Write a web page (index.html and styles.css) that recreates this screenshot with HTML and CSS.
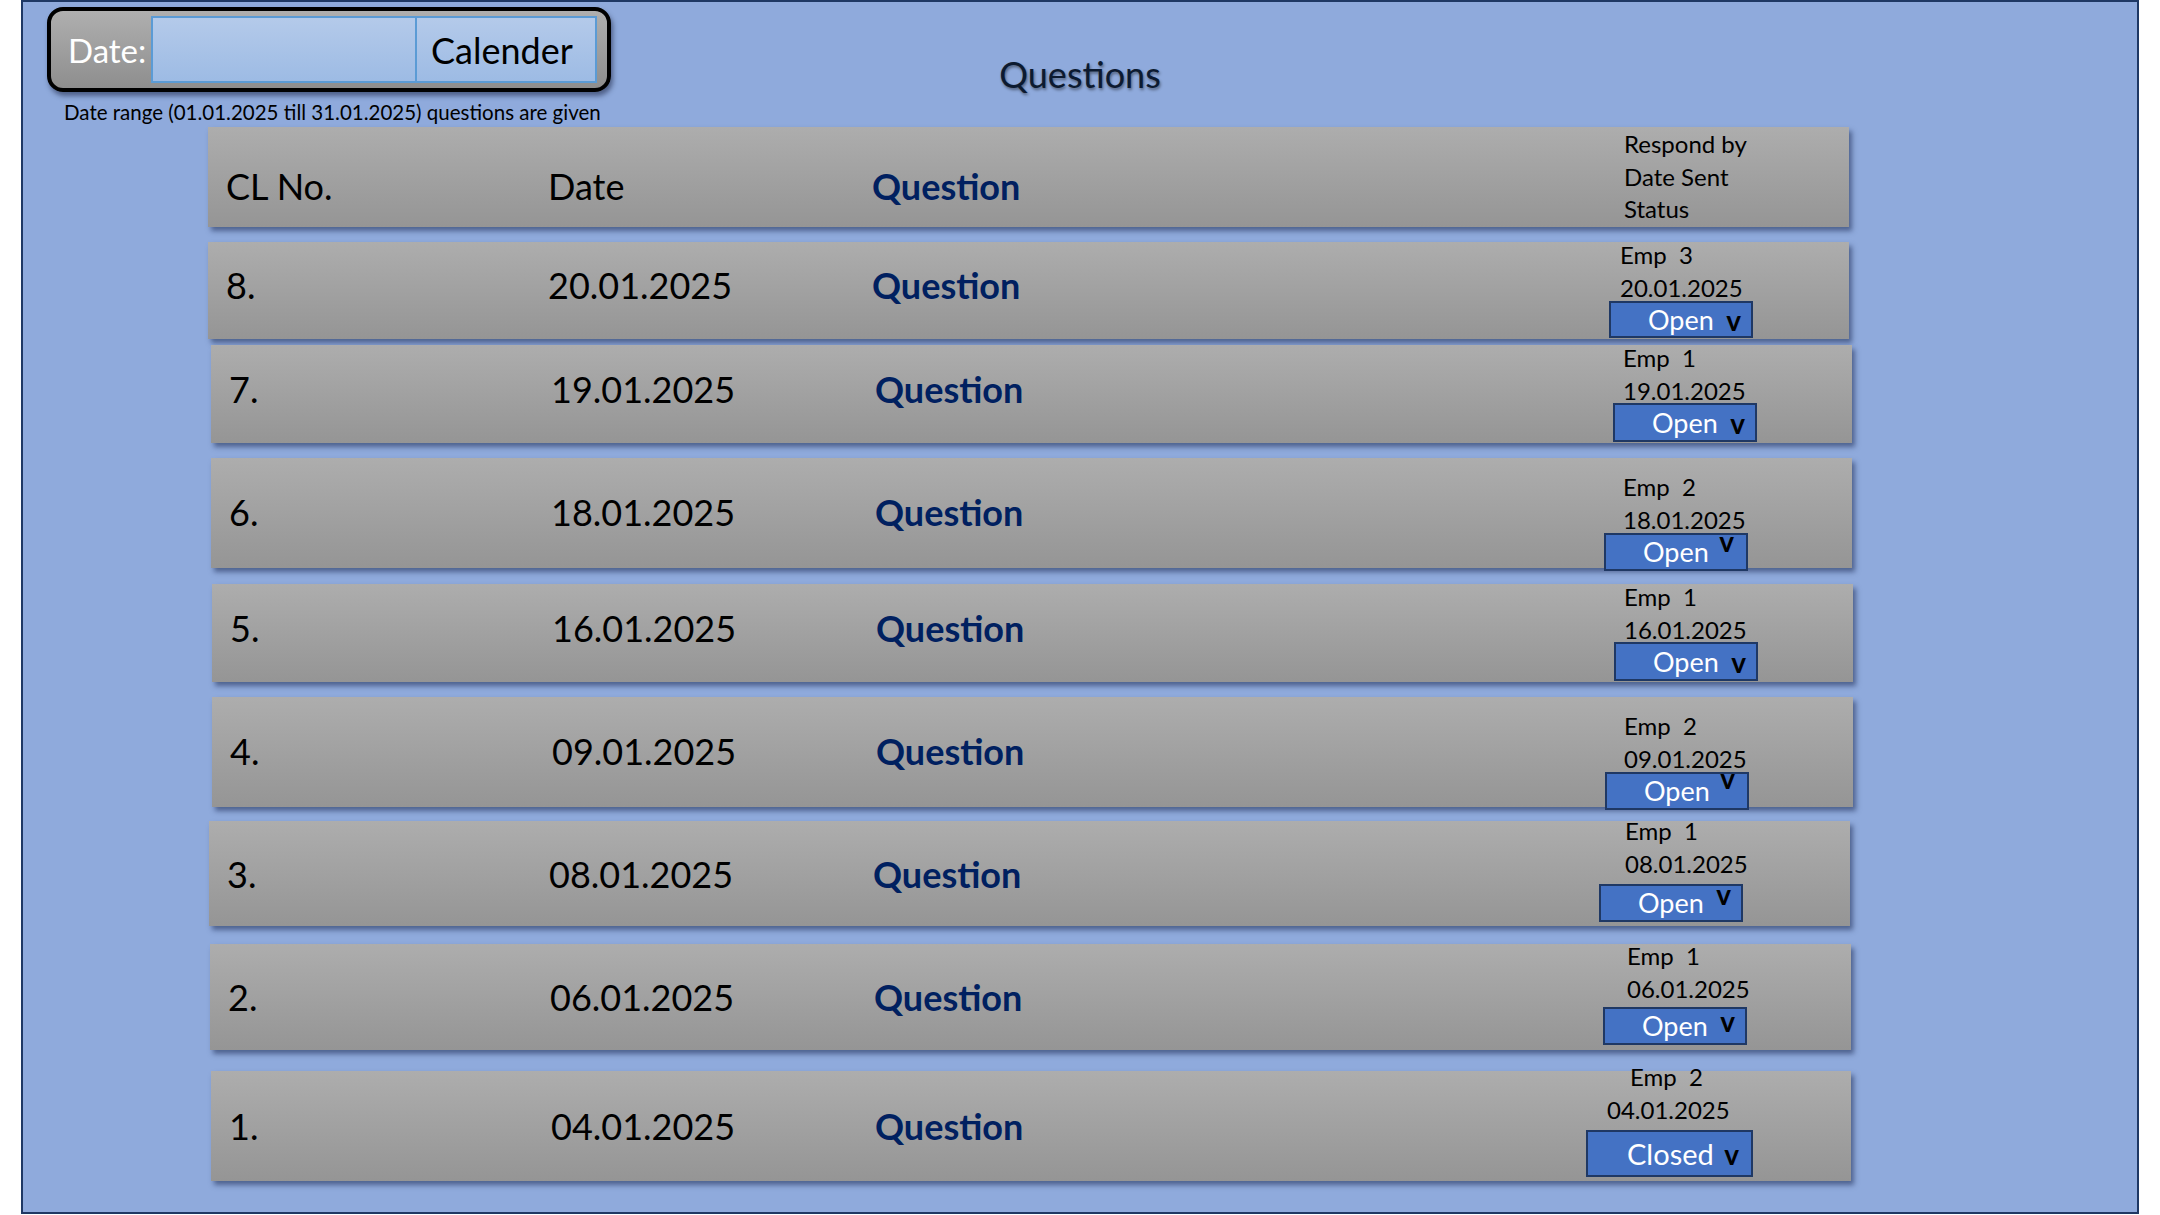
FILE: index.html
```html
<!DOCTYPE html>
<html lang="en">
<head>
<meta charset="utf-8">
<title>Questions</title>
<link rel="stylesheet" href="styles.css">
</head>
<body>
<div class="slide">
  <div class="top">
    <div class="filter">
      <div class="datebox">
        <span class="datelabel">Date:</span>
        <div class="dateinput"></div>
        <div class="calbtn">Calender</div>
      </div>
      <p class="range">Date range (01.01.2025 till 31.01.2025) questions are given</p>
    </div>
    <h1 class="title">Questions</h1>
    <div></div>
  </div>

  <div class="table">
    <div class="row head">
      <span class="cell">CL No.</span>
      <span class="cell">Date</span>
      <span class="cell q">Question</span>
      <div class="head-resp"><span>Respond by</span><span>Date Sent</span><span>Status</span></div>
    </div>

    <div class="row r8">
      <span class="cell">8.</span>
      <span class="cell">20.01.2025</span>
      <span class="cell q">Question</span>
      <div class="resp">
        <span class="emp">Emp&nbsp; 3</span>
        <span class="sent">20.01.2025</span>
        <div class="status"><span class="st">Open</span><span class="chev">v</span></div>
      </div>
    </div>

    <div class="row r7">
      <span class="cell">7.</span>
      <span class="cell">19.01.2025</span>
      <span class="cell q">Question</span>
      <div class="resp">
        <span class="emp">Emp&nbsp; 1</span>
        <span class="sent">19.01.2025</span>
        <div class="status"><span class="st">Open</span><span class="chev">v</span></div>
      </div>
    </div>

    <div class="row r6">
      <span class="cell">6.</span>
      <span class="cell">18.01.2025</span>
      <span class="cell q">Question</span>
      <div class="resp">
        <span class="emp">Emp&nbsp; 2</span>
        <span class="sent">18.01.2025</span>
        <div class="status"><span class="st">Open</span><span class="chev up">v</span></div>
      </div>
    </div>

    <div class="row r5">
      <span class="cell">5.</span>
      <span class="cell">16.01.2025</span>
      <span class="cell q">Question</span>
      <div class="resp">
        <span class="emp">Emp&nbsp; 1</span>
        <span class="sent">16.01.2025</span>
        <div class="status"><span class="st">Open</span><span class="chev">v</span></div>
      </div>
    </div>

    <div class="row r4">
      <span class="cell">4.</span>
      <span class="cell">09.01.2025</span>
      <span class="cell q">Question</span>
      <div class="resp">
        <span class="emp">Emp&nbsp; 2</span>
        <span class="sent">09.01.2025</span>
        <div class="status"><span class="st">Open</span><span class="chev up top0">v</span></div>
      </div>
    </div>

    <div class="row r3">
      <span class="cell">3.</span>
      <span class="cell">08.01.2025</span>
      <span class="cell q">Question</span>
      <div class="resp">
        <span class="emp">Emp&nbsp; 1</span>
        <span class="sent">08.01.2025</span>
        <div class="status"><span class="st">Open</span><span class="chev up low">v</span></div>
      </div>
    </div>

    <div class="row r2">
      <span class="cell">2.</span>
      <span class="cell">06.01.2025</span>
      <span class="cell q">Question</span>
      <div class="resp">
        <span class="emp">Emp&nbsp; 1</span>
        <span class="sent">06.01.2025</span>
        <div class="status"><span class="st">Open</span><span class="chev mid">v</span></div>
      </div>
    </div>

    <div class="row r1">
      <span class="cell">1.</span>
      <span class="cell">04.01.2025</span>
      <span class="cell q">Question</span>
      <div class="resp">
        <span class="emp">Emp&nbsp; 2</span>
        <span class="sent">04.01.2025</span>
        <div class="status closed"><span class="st">Closed</span><span class="chev">v</span></div>
      </div>
    </div>
  </div>
</div>
</body>
</html>
```

FILE: styles.css
```css
* { box-sizing: border-box; }

html, body {
  margin: 0;
  padding: 0;
  background: #ffffff;
}

body {
  width: 2160px;
  height: 1215px;
  overflow: hidden;
  font-family: Lato, "Noto Sans", sans-serif;
  color: #000;
}

.slide {
  margin-left: 21px;
  width: 2118px;
  height: 1214px;
  border: 2px solid #1f3864;
  background: #8faadc;
}

/* ---------- top area ---------- */
.top {
  height: 125px;
  display: grid;
  grid-template-columns: 1fr auto 1fr;
  align-items: start;
}

.filter {
  margin: 5px 0 0 24px;
}

.datebox {
  width: 564px;
  height: 85px;
  border: 4px solid #000;
  border-radius: 16px;
  background: linear-gradient(#afafaf, #8e8e8e);
  box-shadow: 2px 4px 5px rgba(25, 35, 65, 0.55);
  display: flex;
  align-items: center;
  padding-left: 17px;
}

.datelabel {
  width: 83px;
  color: #fff;
  font-size: 33px;
  line-height: 40px;
}

.dateinput {
  width: 266px;
  height: 67px;
  border: 2px solid #5b9bd5;
  background: linear-gradient(#b4caea, #9dbbe4);
}

.calbtn {
  width: 180px;
  height: 67px;
  border: 2px solid #5b9bd5;
  border-left: 0;
  background: linear-gradient(#b4caea, #9dbbe4);
  font-size: 36px;
  line-height: 44px;
  display: flex;
  align-items: center;
  padding-left: 14px;
}

.range {
  margin: 8px 0 0 17px;
  font-size: 20.5px;
  line-height: 24px;
  white-space: nowrap;
}

.title {
  margin: 50px 0 0;
  font-size: 36px;
  font-weight: 400;
  line-height: 44px;
  color: #0c1a30;
  text-shadow: 1px 2px 3px rgba(0, 0, 0, 0.45);
}

/* ---------- table ---------- */
.table {
  margin-left: 185px;
}

.row {
  width: 1641px;
  display: grid;
  grid-template-columns: 322px 324px 748px 1fr;
  align-items: center;
  padding-left: 18px;
  background: linear-gradient(#adadad, #959595);
  box-shadow: 3px 4px 5px rgba(25, 40, 80, 0.55);
}

.cell {
  font-size: 36px;
  line-height: 44px;
  white-space: nowrap;
}

.q {
  font-weight: 700;
  color: #002060;
}

.head { height: 100px; }
.head .cell { margin-top: 17px; }

.head-resp {
  margin-left: 4px;
  display: flex;
  flex-direction: column;
  font-size: 24px;
  line-height: 32.5px;
}

.r8 { margin-top: 15px; height: 97px; }
.r7 { margin-top: 6px;  height: 98px;  margin-left: 3px; }
.r6 { margin-top: 15px; height: 110px; margin-left: 3px; }
.r5 { margin-top: 16px; height: 98px;  margin-left: 4px; }
.r4 { margin-top: 15px; height: 110px; margin-left: 4px; }
.r3 { margin-top: 14px; height: 105px; margin-left: 1px; }
.r2 { margin-top: 18px; height: 106px; margin-left: 2px; }
.r1 { margin-top: 21px; height: 110px; margin-left: 3px; width: 1640px; }

.r8 .cell, .r7 .cell, .r5 .cell { margin-bottom: 11px; }
.r6 .cell, .r4 .cell { margin-bottom: 5px; }

/* responder / date sent / status block */
.resp {
  align-self: start;
  display: flex;
  flex-direction: column;
  align-items: flex-start;
  font-size: 24px;
  line-height: 33px;
  white-space: nowrap;
}

.status {
  width: 144px;
  height: 38px;
  border: 2px solid #1f3864;
  background: #4472c4;
  display: flex;
  align-items: center;
  padding: 0 10px 0 37px;
}

.st {
  color: #fff;
  font-size: 27px;
  line-height: 34px;
}

.chev {
  margin-left: auto;
  font-size: 28px;
  font-weight: 700;
  line-height: 34px;
  color: #000;
}

.chev.up { align-self: flex-start; line-height: 10px; margin-top: 1px; }
.chev.up.top0 { margin-top: -1px; }
.chev.up.low { margin-top: 3px; }
.chev.mid { margin-bottom: 11px; }

.r8 .resp { margin-top: -4px; }
.r8 .status { margin: -3px 0 0 -11px; height: 37px; }

.r7 .resp { margin-top: -4px; }
.r7 .status { margin: -4px 0 0 -10px; height: 39px; }

.r6 .resp { margin-top: 12px; }
.r6 .status { margin: -3px 0 0 -19px; padding-right: 12px; }

.r5 .resp { margin-top: -4px; }
.r5 .status { margin: -4px 0 0 -10px; height: 39px; }

.r4 .resp { margin-top: 12px; }
.r4 .status { margin: -3px 0 0 -19px; padding-right: 12px; }

.r3 .resp { margin: -7px 0 0 4px; }
.r3 .status { margin: 4px 0 0 -26px; }

.r2 .resp { margin: -5px 0 0 5px; }
.r2 .status { margin: 2px 0 0 -24px; }

.r1 .resp { margin: -11px 0 0 -16px; }
.r1 .emp { margin-left: 23px; }
.r1 .status { margin: 4px 0 0 -21px; width: 167px; height: 47px; padding-left: 39px; padding-right: 12px; }
.status.closed .st { font-size: 29px; }
```
